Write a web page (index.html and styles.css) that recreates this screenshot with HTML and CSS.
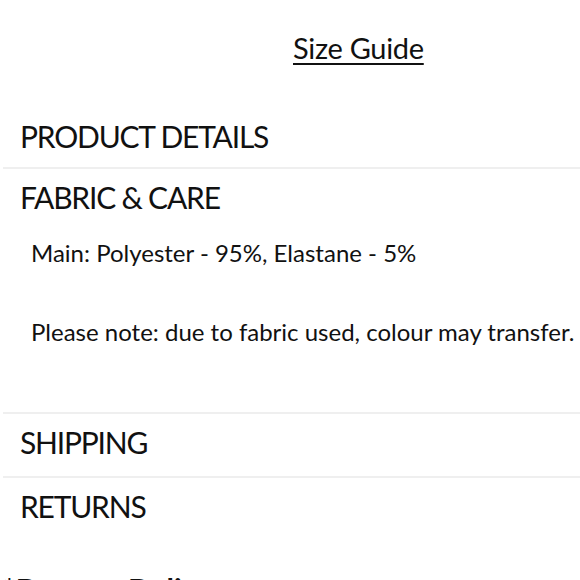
FILE: index.html
```
<!DOCTYPE html>
<html>
<head>
<meta charset="utf-8">
<link rel="stylesheet" href="styles.css">
</head>
<body>
<div class="page">
  <div class="guide-row"><a class="guide">Size Guide</a></div>
  <div class="acc">
    <div class="acc-head first">PRODUCT DETAILS</div>
    <div class="acc-item">
      <div class="acc-head">FABRIC &amp; CARE</div>
      <div class="acc-body">
        <p>Main: Polyester - 95%, Elastane - 5%</p>
        <p>Please note: due to fabric used, colour may transfer.</p>
      </div>
    </div>
    <div class="acc-item"><div class="acc-head">SHIPPING</div></div>
    <div class="acc-item"><div class="acc-head">RETURNS</div></div>
  </div>
  <div class="promo">*Dresses Delivery</div>
</div>
</body>
</html>
```
FILE: styles.css
```
html, body { margin: 0; padding: 0; background: #fff; }
body { font-family: "Lato", "Liberation Sans", sans-serif; color: #111; }
.page { width: 580px; overflow: hidden; height: 580px; }
.guide-row { padding: 30px 0 0 293px; height: 108px; box-sizing: border-box; }
.guide { font-size: 29px; letter-spacing: -0.3px; text-decoration: underline; text-underline-offset: 4px; text-decoration-thickness: 2px; }
.acc { margin-left: 3px; }
.acc-item { border-top: 2px solid #efefef; }
.acc-head { font-size: 30px; line-height: 32px; letter-spacing: -1.2px; padding: 12px 0 18px 17px; }
.acc-head.first { padding-bottom: 15px; }
.acc-body { padding: 6px 0 64px 28px; font-size: 24px; }
.acc-body p { margin: 0 0 47px; line-height: 32px; }
.acc-body p:last-child { margin-bottom: 0; }
.promo { font-weight: bold; font-size: 30px; line-height: 32px; padding: 33px 0 0 3px; }
```
